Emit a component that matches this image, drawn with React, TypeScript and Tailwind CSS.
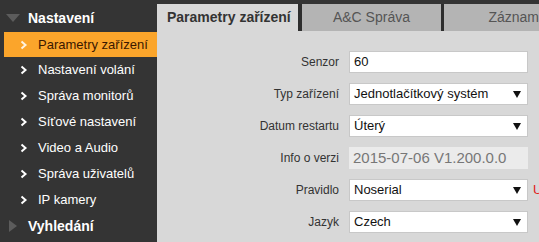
import React from 'react';

const FONT = { fontFamily: '"Liberation Sans", Arial, sans-serif' };

const menuItems = [
  'Parametry zařízení',
  'Nastavení volání',
  'Správa monitorů',
  'Síťové nastavení',
  'Video a Audio',
  'Správa uživatelů',
  'IP kamery',
];

const Chevron: React.FC<{ light?: boolean }> = ({ light }) => (
  <svg width="8" height="10" viewBox="0 0 8 10" className="shrink-0">
    <polyline
      points="1.5,1.5 5.5,5 1.5,8.5"
      fill="none"
      stroke={light ? '#fff3e0' : '#ffffff'}
      strokeWidth="2"
    />
  </svg>
);

const Arrow: React.FC = () => (
  <svg width="8" height="7" viewBox="0 0 8 7" className="shrink-0">
    <polygon points="0,0 8,0 4,7" fill="#111" />
  </svg>
);

const Row: React.FC<{ label: string; children: React.ReactNode; extra?: React.ReactNode }> = ({
  label,
  children,
  extra,
}) => (
  <div className="flex items-center h-[22px]">
    <div className="w-[192px] shrink-0 text-right text-[12px] text-[#333] pr-[10px]">{label}</div>
    {children}
    {extra}
  </div>
);

const Select: React.FC<{ value: string }> = ({ value }) => (
  <div className="w-[179px] h-[22px] bg-white border border-[#c8c8c8] flex items-center justify-between pl-[4px] pr-[6px] text-[13px] text-[#111] shrink-0">
    <span>{value}</span>
    <Arrow />
  </div>
);

const App: React.FC = () => {
  return (
    <div className="w-[539px] h-[242px] overflow-hidden flex bg-[#343434]" style={FONT}>
      {/* Sidebar */}
      <div className="w-[157px] shrink-0 bg-[#343434] flex flex-col">
        <div className="h-[32px] pt-[4px] flex items-center pl-[6px] gap-[8px]">
          <svg width="14" height="8" viewBox="0 0 14 8">
            <polygon points="0,0 14,0 7,8" fill="#5c5c5c" />
          </svg>
          <span className="text-white font-bold text-[14px]">Nastavení</span>
        </div>
        {menuItems.map((item, i) =>
          i === 0 ? (
            <div
              key={item}
              className="ml-[4px] h-[25px] bg-[#fba52b] flex items-center pl-[16px] gap-[10px]"
            >
              <Chevron light />
              <span className="text-[13px] text-[#3a1800]">{item}</span>
            </div>
          ) : (
            <div key={item} className="h-[26px] flex items-center pl-[20px] gap-[10px]">
              <Chevron />
              <span className="text-[13px] text-white">{item}</span>
            </div>
          )
        )}
        <div className="h-[26px] flex items-center pl-[6px] gap-[8px]">
          <svg width="14" height="14" viewBox="0 0 14 14">
            <polygon points="3,1 11,7 3,13" fill="#5c5c5c" />
          </svg>
          <span className="text-white font-bold text-[14px]">Vyhledání</span>
        </div>
      </div>

      {/* Content */}
      <div className="flex-1 flex flex-col pt-[4px] min-w-0">
        <div className="h-[27px] flex shrink-0">
          <div className="w-[146px] bg-[#d8d8d8] flex items-center pl-[10px] text-[14px] font-bold text-[#333]">
            Parametry zařízení
          </div>
          <div className="w-[4px] bg-[#2e2e2e]" />
          <div className="w-[143px] bg-[#b4b4b4] flex items-center justify-center text-[14px] text-[#555]">
            A&amp;C Správa
          </div>
          <div className="w-[4px] bg-[#2e2e2e]" />
          <div className="flex-1 bg-[#b4b4b4] flex items-center pl-[44px] text-[14px] text-[#555] whitespace-nowrap">
            Záznam
          </div>
        </div>
        <div className="flex-1 bg-[#d8d8d8] pt-[20px] flex flex-col gap-[10px] whitespace-nowrap">
          <Row label="Senzor">
            <div className="w-[179px] h-[22px] bg-white border border-[#c8c8c8] flex items-center pl-[4px] text-[13px] text-[#111] shrink-0">
              60
            </div>
          </Row>
          <Row label="Typ zařízení">
            <Select value="Jednotlačítkový systém" />
          </Row>
          <Row label="Datum restartu">
            <Select value="Úterý" />
          </Row>
          <Row label="Info o verzi">
            <div className="w-[179px] h-[22px] bg-[#ebebeb] flex items-center pl-[4px] text-[15px] text-[#777] shrink-0 overflow-hidden">
              2015-07-06 V1.200.0.0
            </div>
          </Row>
          <Row
            label="Pravidlo"
            extra={<span className="ml-[5px] text-[13px] text-[#e02020]">Upozornění</span>}
          >
            <Select value="Noserial" />
          </Row>
          <Row label="Jazyk">
            <Select value="Czech" />
          </Row>
        </div>
      </div>
    </div>
  );
};

export default App;
